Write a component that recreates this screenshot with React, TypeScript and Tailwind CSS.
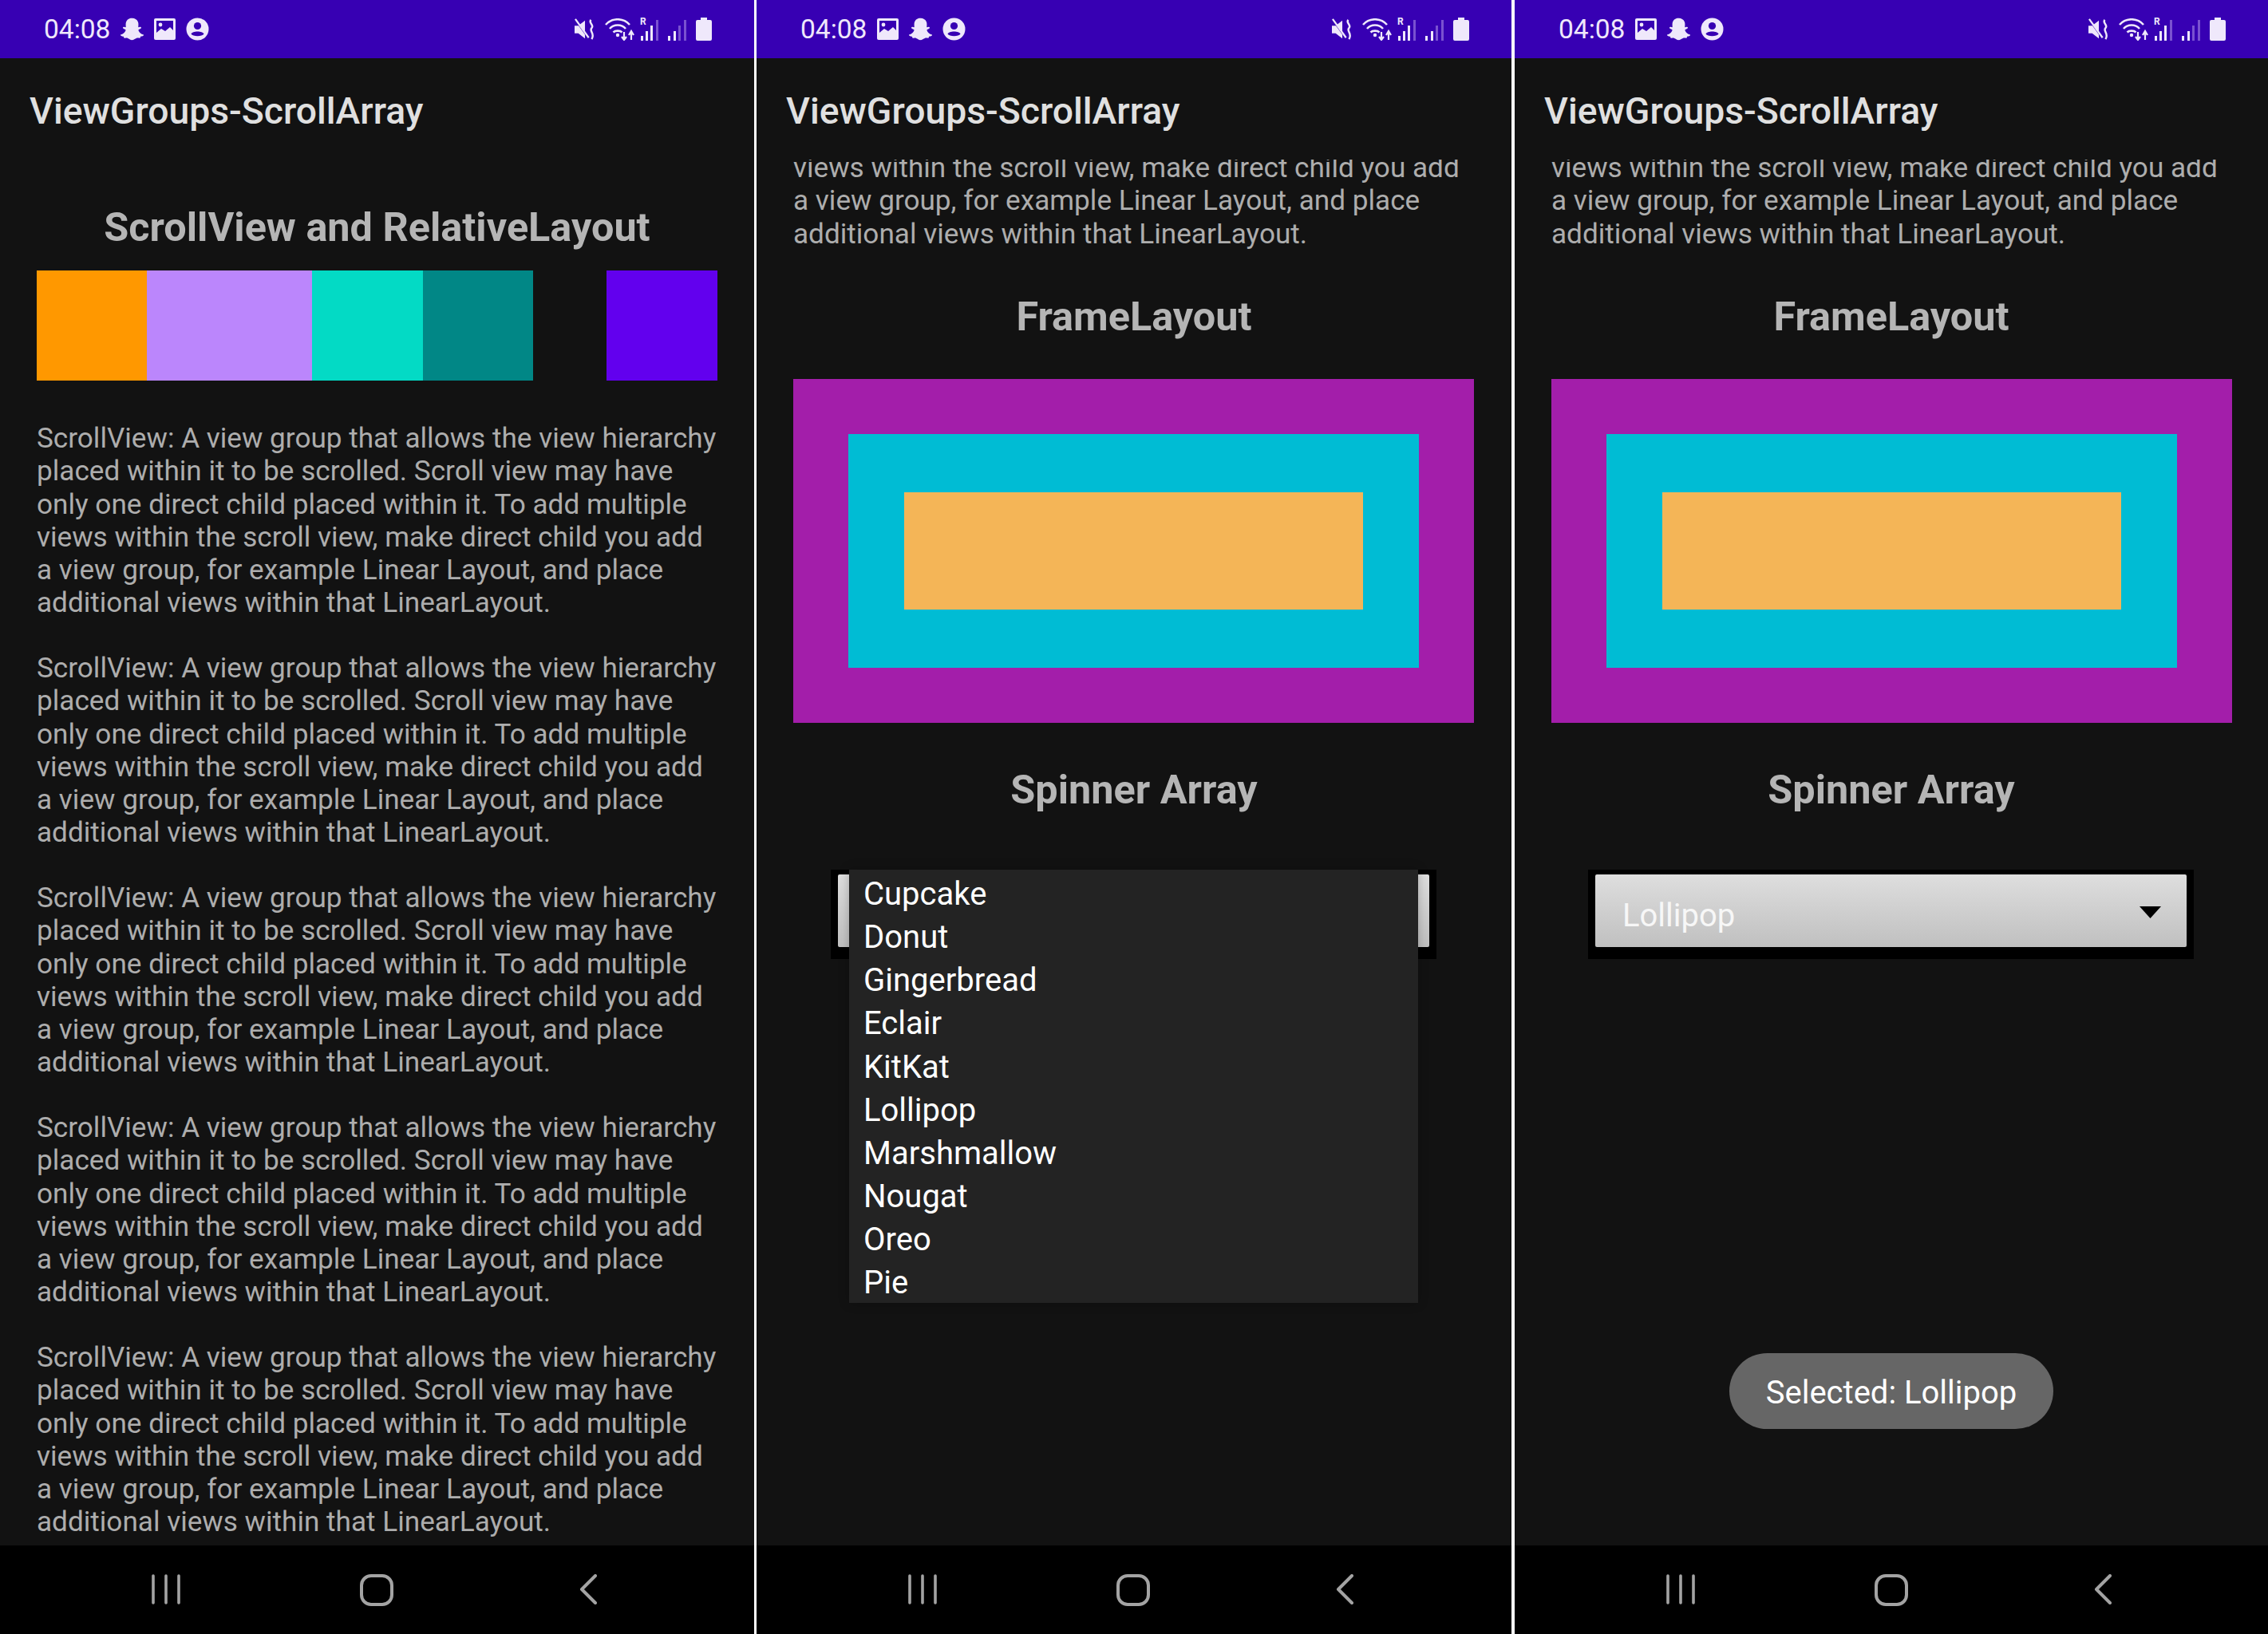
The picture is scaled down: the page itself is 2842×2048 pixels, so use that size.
import { FaSnapchatGhost } from "react-icons/fa";

const font = "font-['Roboto',sans-serif]";

const paragraph = [
  "ScrollView: A view group that allows the view hierarchy",
  "placed within it to be scrolled. Scroll view may have",
  "only one direct child placed within it. To add multiple",
  "views within the scroll view, make direct child you add",
  "a view group, for example Linear Layout, and place",
  "additional views within that LinearLayout.",
];

const items = ["Cupcake", "Donut", "Gingerbread", "Eclair", "KitKat", "Lollipop", "Marshmallow", "Nougat", "Oreo", "Pie"];

const c = "#efe8fb";

function ImageIcon() {
  return (
    <svg width="27" height="27" viewBox="0 0 27 27">
      <rect x="0" y="0" width="27" height="27" rx="2" fill={c} />
      <rect x="3" y="3" width="21" height="21" fill="#3700b3" />
      <circle cx="8" cy="8" r="2.4" fill={c} />
      <path d="M3 21 L3 18 L9 13 L14 16 L20 11 L24 15 L24 24 L3 24Z" fill={c} />
    </svg>
  );
}

function Snap() {
  return <FaSnapchatGhost size={29} color={c} />;
}

function Account() {
  return (
    <svg width="29" height="29" viewBox="0 0 29 29">
      <circle cx="14.5" cy="14.5" r="14" fill={c} />
      <circle cx="14.5" cy="10.5" r="4.6" fill="#3700b3" />
      <path d="M6.5 20.5 C8 16.5 21 16.5 22.5 20.5 C20.5 24 8.5 24 6.5 20.5Z" fill="#3700b3" />
    </svg>
  );
}

function RightIcons() {
  return (
    <div className="flex items-center">
      <svg width="27" height="28" viewBox="0 0 29 28" className="mr-[11px]">
        <path d="M0 9 H5 L14 2 V26 L5 19 H0Z" fill={c} />
        <path d="M1 1 L19 26" stroke="#3700b3" strokeWidth="2" />
        <path d="M1 0 L19 25" stroke={c} strokeWidth="2.4" />
        <path d="M22 1 C18 5 27 8 23 12 C19 16 28 19 23 27" stroke={c} strokeWidth="2.6" fill="none" />
      </svg>
      <svg width="38" height="28" viewBox="0 0 38 28" className="mr-[6px]">
        <path d="M1 8 C9 -1 23 -1 31 8" stroke={c} strokeWidth="2.6" fill="none" />
        <path d="M6 13 C11 7 21 7 26 13" stroke={c} strokeWidth="2.6" fill="none" />
        <path d="M10.5 17.5 C13 15 19 15 21.5 17.5" stroke={c} strokeWidth="2.6" fill="none" />
        <circle cx="16" cy="21" r="2.2" fill={c} />
        <path d="M24 17 V26 M21 23 L24 27 L27 23" stroke={c} strokeWidth="2.2" fill="none" />
        <path d="M33 27 V18 M30 21 L33 16 L36 21" stroke={c} strokeWidth="2.2" fill="none" />
      </svg>
      <div className="relative mr-[10px] h-[28px] w-[24px]">
        <span className={`absolute left-0 top-[-3px] text-[12px] font-bold leading-[14px] text-[#efe8fb] ${font}`}>R</span>
        <svg width="24" height="28" viewBox="0 0 24 28" className="absolute inset-0">
          <rect x="1" y="22" width="3" height="6" fill={c} />
          <rect x="7" y="16" width="3" height="12" fill={c} />
          <rect x="13" y="9" width="3" height="19" fill={c} />
          <rect x="20" y="2" width="3" height="26" fill="#7a52d0" />
        </svg>
      </div>
      <svg width="25" height="28" viewBox="0 0 25 28" className="mr-[11px]">
        <rect x="1" y="22" width="3" height="6" fill={c} />
        <rect x="8" y="16" width="3" height="12" fill={c} />
        <rect x="14" y="9" width="3" height="19" fill="#7a52d0" />
        <rect x="21" y="2" width="3" height="26" fill="#7a52d0" />
      </svg>
      <svg width="20" height="29" viewBox="0 0 20 29">
        <path d="M6 0 H14 V3 H18 Q20 3 20 5 V27 Q20 29 18 29 H2 Q0 29 0 27 V5 Q0 3 2 3 H6Z" fill={c} />
      </svg>
    </div>
  );
}

function NavBar() {
  return (
    <div className="flex h-[111px] shrink-0 items-start bg-black pl-[190px] pt-[36px]">
      <svg width="36" height="38" viewBox="0 0 36 38" fill="none" stroke="#a3a3a3" strokeWidth="3.6" strokeLinecap="round" className="mr-[225px]">
        <path d="M2 2 V36 M18 2 V36 M34 2 V36" />
      </svg>
      <svg width="42" height="40" viewBox="0 0 42 40" fill="none" stroke="#a3a3a3" strokeWidth="4" className="mr-[234px]">
        <rect x="2" y="2" width="38" height="36" rx="12" />
      </svg>
      <svg width="22" height="38" viewBox="0 0 22 38" fill="none" stroke="#a3a3a3" strokeWidth="4" strokeLinecap="round" strokeLinejoin="round" className="-ml-[1px]">
        <path d="M20 2 L3 19 L20 36" />
      </svg>
    </div>
  );
}

function Frame({ left, children, width }: { left: React.ReactNode; children: React.ReactNode; width: string }) {
  return (
    <div className={`relative flex h-full shrink-0 flex-col overflow-hidden bg-[#121212] ${width} ${font}`}>
      <div className="flex h-[73px] shrink-0 items-center justify-between bg-[#3700b3] pl-[55px] pr-[53px]">
        <div className="flex items-center gap-[13px]">
          <span className="text-[33.5px] leading-[40px] text-[#efe8fb]">04:08</span>
          {left}
        </div>
        <RightIcons />
      </div>
      <div className="flex h-[127px] shrink-0 items-start pl-[37px] pt-[36px]">
        <span className="text-[46.3px] font-medium leading-[60px] text-[#e0e0e0]">ViewGroups-ScrollArray</span>
      </div>
      <div className="relative min-h-0 flex-1 overflow-hidden">{children}</div>
      <NavBar />
    </div>
  );
}

function Heading({ children, className }: { children: React.ReactNode; className: string }) {
  return <div className={`text-center text-[50.4px] font-bold leading-[60px] text-[#b5b5b5] ${className}`}>{children}</div>;
}

function Lines({ lines, className }: { lines: string[]; className?: string }) {
  return (
    <div className={`whitespace-nowrap px-[46px] text-[35.15px] leading-[41.25px] text-[#adadad] ${className ?? ""}`}>
      {lines.map((l) => (
        <div key={l}>{l}</div>
      ))}
    </div>
  );
}

function FrameBlock() {
  return (
    <>
      <Lines lines={paragraph.slice(3)} className="-mt-[10px]" />
      <Heading className="mt-[53px]">FrameLayout</Heading>
      <div className="ml-[46px] mt-[48px] h-[431px] w-[853px] bg-[#a31eaa] px-[69px] py-[69px]">
        <div className="h-full bg-[#00bcd4] px-[70px] py-[73px]">
          <div className="h-full bg-[#f4b557]" />
        </div>
      </div>
      <Heading className="mt-[54px]">Spinner Array</Heading>
    </>
  );
}

function Spinner({ selected }: { selected?: string }) {
  return (
    <div className="mx-[93px] mt-[70px] h-[112px] w-[759px] bg-black px-[9px] pb-[15px] pt-[6px]">
      <div className="flex h-full items-center justify-between rounded-[2px] bg-gradient-to-b from-[#dedede] to-[#c0c0c0] pl-[34px] pr-[32px]">
        <span className="mt-[13px] text-[40px] text-[#f7f7f7]">{selected}</span>
        <svg width="27" height="15" viewBox="0 0 27 15" className="mt-[5px]">
          <path d="M0 0 H27 L13.5 15Z" fill="#000" />
        </svg>
      </div>
    </div>
  );
}

export default function App() {
  return (
    <div className="flex h-[2048px] w-[2842px] overflow-hidden bg-white">
      <Frame
        width="w-[945px]"
        left={
          <>
            <Snap />
            <ImageIcon />
            <Account />
          </>
        }
      >
        <Heading className="mt-[55px]">ScrollView and RelativeLayout</Heading>
        <div className="mx-[46px] mt-[24px] flex h-[138px]">
          <div className="w-[138px] bg-[#ff9800]" />
          <div className="w-[207px] bg-[#bb86fc]" />
          <div className="w-[139px] bg-[#03dac5]" />
          <div className="w-[138px] bg-[#018786]" />
          <div className="w-[92px]" />
          <div className="w-[139px] bg-[#6200ee]" />
        </div>
        <div className="mt-[52px] flex flex-col gap-[40.5px]">
          {[0, 1, 2, 3, 4].map((i) => (
            <Lines key={i} lines={paragraph} />
          ))}
        </div>
      </Frame>
      <div className="w-[3px] shrink-0" />
      <Frame
        width="w-[946px]"
        left={
          <>
            <ImageIcon />
            <Snap />
            <Account />
          </>
        }
      >
        <FrameBlock />
        <div className="relative">
          <Spinner />
          <div className="absolute left-[116px] top-0 h-[543px] w-[713px] bg-[#232323] pl-[18px] pt-[4px] shadow-[0_0_12px_rgba(0,0,0,0.25)]">
            {items.map((it) => (
              <div key={it} className="h-[54.2px] text-[40px] leading-[54.2px] text-white">
                {it}
              </div>
            ))}
          </div>
        </div>
      </Frame>
      <div className="w-[4px] shrink-0" />
      <Frame
        width="w-[944px]"
        left={
          <>
            <ImageIcon />
            <Snap />
            <Account />
          </>
        }
      >
        <FrameBlock />
        <div className="-ml-[1px]">
          <Spinner selected="Lollipop" />
        </div>
        <div className="absolute bottom-[146px] left-1/2 flex h-[95px] w-[406px] -translate-x-1/2 items-center justify-center rounded-full bg-[#666666] pt-[5px] text-[40px] text-white">
          Selected: Lollipop
        </div>
      </Frame>
    </div>
  );
}
